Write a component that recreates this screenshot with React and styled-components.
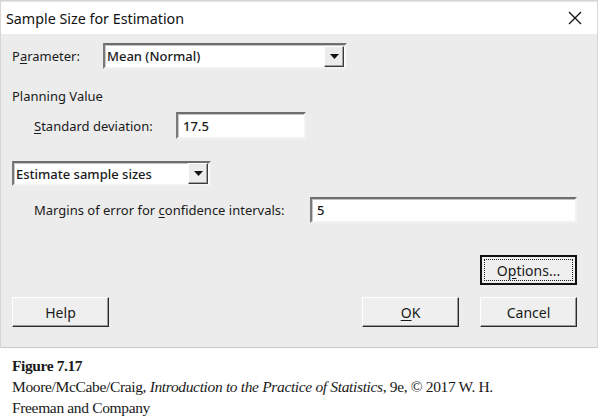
import React from 'react';
import styled, { createGlobalStyle } from 'styled-components';

const GlobalStyle = createGlobalStyle`
  html, body { margin: 0; padding: 0; background: #ffffff; }
  body { width: 600px; height: 420px; overflow: hidden; }
`;

const Dialog = styled.div`
  box-sizing: border-box;
  width: 598px;
  height: 348px;
  border: 1px solid #d6d6d6;
  border-bottom-color: #c8c8c8;
  background: #ececec;
  font-family: "Noto Sans", "Open Sans", sans-serif;
  font-size: 13px;
  color: #1a1a1a;
  display: flex;
  flex-direction: column;
`;

const TitleBar = styled.div`
  height: 32px;
  background: #ffffff;
  display: flex;
  align-items: center;
  justify-content: space-between;
  padding: 0 14px 0 5px;
  border-top: 1px solid #e4e4e4;
  font-size: 14.3px;
  color: #111;
`;

const CloseIcon = () => (
  <svg width="16" height="16" viewBox="0 0 16 16">
    <path d="M2 2 L14 14 M14 2 L2 14" stroke="#111" strokeWidth="1.3" />
  </svg>
);

const Body = styled.div`
  flex: 1;
  display: flex;
  flex-direction: column;
  padding: 0 20px 0 11px;
`;

const Row = styled.div`
  display: flex;
  align-items: center;
  margin-top: ${p => p.top || 0}px;
  padding-left: ${p => p.indent || 0}px;
  justify-content: ${p => p.justify || 'flex-start'};
`;

const Label = styled.div`
  width: ${p => (p.width ? p.width + 'px' : 'auto')};
  flex-shrink: 0;
  white-space: nowrap;
`;

const Key = styled.span`
  text-decoration: underline;
  text-underline-offset: 2px;
`;

const Field = styled.div`
  box-sizing: border-box;
  width: ${p => p.width}px;
  height: ${p => p.height || 26}px;
  background: #ffffff;
  border: 2px solid;
  border-color: #6e6e6e #f2f2f2 #f2f2f2 #7a7a7a;
  box-shadow: inset 1px 1px 0 #c4c4c4;
  display: flex;
  align-items: center;
  padding-left: 5px;
  font-weight: 500;
`;

const Combo = styled(Field)`
  padding-left: 2px;
  padding-right: 1px;
  justify-content: space-between;
`;

const DropButton = styled.div`
  box-sizing: border-box;
  width: 20px;
  height: 21px;
  background: #ececec;
  border: 1px solid;
  border-color: #ffffff #3c3c3c #3c3c3c #ffffff;
  box-shadow: inset -1px -1px 0 #a0a0a0;
  display: flex;
  align-items: center;
  justify-content: center;
`;

const Arrow = () => (
  <svg width="9" height="5" viewBox="0 0 9 5">
    <path d="M0 0 H9 L4.5 5 Z" fill="#111" />
  </svg>
);

const Button = styled.div`
  box-sizing: border-box;
  width: 97px;
  height: 30px;
  background: #efefef;
  border: 1px solid;
  border-color: #ffffff #2a2a2a #2a2a2a #ffffff;
  box-shadow: inset -1px -1px 0 #9a9a9a;
  display: flex;
  align-items: center;
  justify-content: center;
  font-size: 14px;
  ${p => p.focused && `
    border: 2px solid #111;
    box-shadow: none;
    padding: 2px;
  `}
`;

const FocusRect = styled.div`
  box-sizing: border-box;
  width: 100%;
  height: 100%;
  border: 1px dotted #222;
  display: flex;
  align-items: center;
  justify-content: center;
`;

const ButtonRow = styled.div`
  display: flex;
  margin-top: 12px;
  align-items: center;
`;

const Spacer = styled.div`
  flex: 1;
`;

const Gap = styled.div`
  width: 21px;
`;

const Caption = styled.div`
  padding: 7px 12px 0;
  font-family: "Liberation Serif", "Times New Roman", serif;
  font-size: 15.5px;
  letter-spacing: -0.35px;
  line-height: 21px;
  color: #1a1a1a;
`;

const FigureTitle = styled.div`
  font-weight: bold;
  font-size: 15.5px;
  letter-spacing: -0.4px;
`;

export default function App() {
  return (
    <>
      <GlobalStyle />
      <Dialog>
        <TitleBar>
          <span>Sample Size for Estimation</span>
          <CloseIcon />
        </TitleBar>
        <Body>
          <Row top={9}>
            <Label width={91}>P<Key>a</Key>rameter:</Label>
            <Combo width={244}>
              <span>Mean (Normal)</span>
              <DropButton><Arrow /></DropButton>
            </Combo>
          </Row>
          <Row top={18}>
            <Label>Planning Value</Label>
          </Row>
          <Row top={7} indent={22}>
            <Label width={142}><Key>S</Key>tandard deviation:</Label>
            <Field width={130} height={27}>17.5</Field>
          </Row>
          <Row top={22}>
            <Combo width={199} height={25}>
              <span>Estimate sample sizes</span>
              <DropButton><Arrow /></DropButton>
            </Combo>
          </Row>
          <Row top={11} indent={22}>
            <Label width={276}>Margins of error for <Key>c</Key>onfidence intervals:</Label>
            <Field width={268}>5</Field>
          </Row>
          <Row top={32} justify="flex-end">
            <Button focused>
              <FocusRect>O<Key>p</Key>tions...</FocusRect>
            </Button>
          </Row>
          <ButtonRow>
            <Button>Help</Button>
            <Spacer />
            <Button><Key>O</Key>K</Button>
            <Gap />
            <Button>Cancel</Button>
          </ButtonRow>
        </Body>
      </Dialog>
      <Caption>
        <FigureTitle>Figure 7.17</FigureTitle>
        <div>
          Moore/McCabe/Craig, <i>Introduction to the Practice of Statistics</i>, 9e, © 2017 W. H.
        </div>
        <div>Freeman and Company</div>
      </Caption>
    </>
  );
}
